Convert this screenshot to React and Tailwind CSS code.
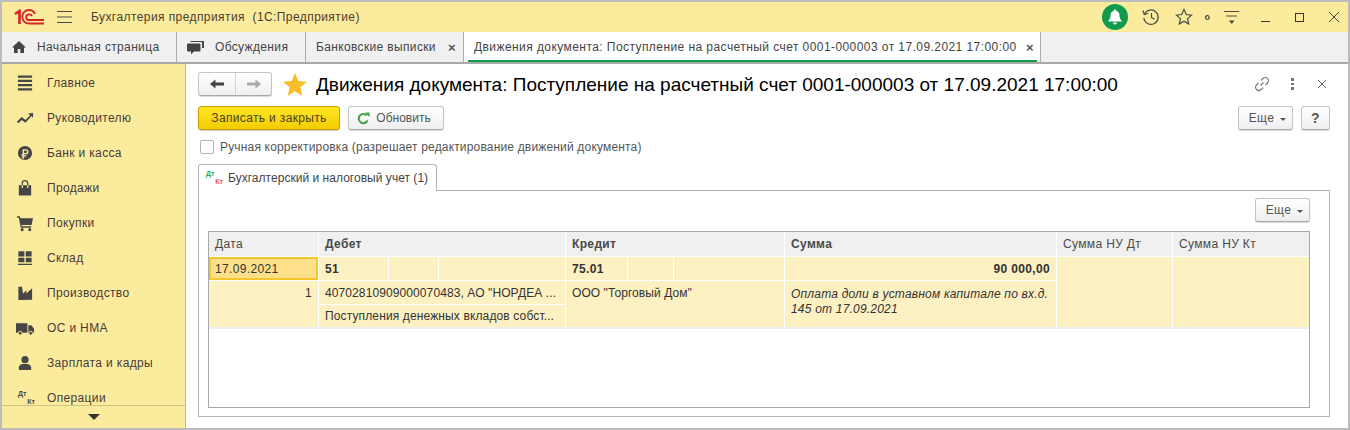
const menu = [
  ['Главное', <path key="a" d="M2 1h15v2.4H2zM2 5.500h15v2.400H2zM2 10h15v2.400H2zM2 14.500h15v2.400H2z" />],
  ['Руководителю', <path key="a" d="M1 13l5-5 4 3 5-5-2.500-1.500L18 3.500V9l-1.500-2L10 14l-4-3-3.500 3.500z" />],
  ['Банк и касса', <path key="a" fillRule="evenodd" d="M9.500 1.500a7.500 7.500 0 100 15 7.500 7.500 0 000-15zM7 5h3.500a2.700 2.700 0 010 5.400H8.600v1h2.400v1.200H8.600V15H7v-1.400H5.800v-1.200H7v-1H5.800V10H7zm1.600 1.400v2.600h1.800a1.300 1.300 0 000-2.600z" />],
  ['Продажи', <path key="a" d="M3 6h3V4a3.500 3.500 0 017 0v2h3v11H3zm4.300 0h4.400V4a2.200 2.200 0 00-4.400 0zM6 6v3h1.300V6zm5.700 0v3H13V6z" />],
  ['Покупки', <g key="a"><path d="M1 2h3l.6 2H18l-1.600 7H5.800l.3 1.500H16V14H5L3 3.500H1z" /><circle cx="6.500" cy="16" r="1.600" /><circle cx="14.500" cy="16" r="1.600" /></g>],
  ['Склад', <path key="a" d="M2.500 2h6.300v5.500H2.500zM10.200 2h6.300v5.500h-6.300zM2.500 8.800h6.300v4.700H2.500zM10.200 8.800h6.300v4.700h-6.300zM2 15h15v1.500H2z" />],
  ['Производство', <path key="a" d="M2.500 16.500V2.500h3.800l1.200 7 3.500-3.500v3.500l6-5.500v12z" />],
  ['ОС и НМА', <g key="a"><path d="M0 4h12v10H0zM13 6h3.200L19 9.500V14h-6z" /><circle cx="4.500" cy="14.500" r="2" stroke="#fbec9d" /><circle cx="15.500" cy="14.500" r="2" stroke="#fbec9d" /></g>],
  ['Зарплата и кадры', <g key="a"><circle cx="9.500" cy="5.500" r="3.800" /><path d="M3 16.500v-3c0-2 2.500-3.300 4-3.500h5c1.500.2 4 1.500 4 3.500v3z" /></g>],
]

const baseText = 'text-[12px] tracking-[0.35px] leading-none'

const Tab = ({ width, children, withClose }) => (
  <div className={`flex items-center h-full border-r border-[#adadad] ${width} ${baseText} text-[#444]`}>
    {children}
    {withClose && <span className="ml-auto mr-[7px] text-[13px] font-bold text-[#555]">×</span>}
  </div>
)

const Button = ({ children, className = '' }) => (
  <div className={`flex items-center justify-center h-[24px] rounded-[3px] border border-[#c4c4c4] border-b-[#a8a8a8] bg-gradient-to-b from-white to-[#efefef] shadow-[0_1px_1px_rgba(0,0,0,0.15)] ${baseText} text-[#555] ${className}`}>
    {children}
  </div>
)

const Caret = () => <span className="ml-[6px] mt-[3px] border-x-[3px] border-t-[3px] border-x-transparent border-t-[#555]" />

const HeaderCell = ({ span, bold, children }) => (
  <div className={`${span} bg-[#f0f0f0] flex items-center pl-[6px] pb-[1px] ${baseText} ${bold ? 'font-bold' : ''} text-[#4a4a4a]`}>{children}</div>
)

const Cell = ({ className = '', children }) => (
  <div className={`bg-[#fdf0c2] flex items-center px-[6px] ${baseText} text-[#333] whitespace-nowrap overflow-hidden ${className}`}>{children}</div>
)

const DtKt = ({ dt, kt }) => (
  <div className="flex flex-col w-[17px] h-[16px] font-bold text-[7px] leading-[8px] tracking-normal shrink-0">
    <span className="self-start" style={{ color: dt }}>Дт</span>
    <span className="self-end" style={{ color: kt }}>Кт</span>
  </div>
)

const App = () => {
  return (
    <div className="w-[1350px] h-[430px] border-2 border-[#bcbcbc] flex flex-col overflow-hidden bg-white font-['Liberation_Sans',Arial,sans-serif]">
      {/* top bar */}
      <div className="h-[30px] shrink-0 bg-[#fbec9d] flex items-center text-[#4e3b2e]">
        <svg width="30" height="16" viewBox="0 0 30 16" className="ml-[12px]" fill="none" stroke="#d8232a" strokeWidth="1.800">
          <path d="M1 5L5.500 2v13" strokeWidth="2.600" />
          <path d="M21 5c-1-2.500-3-4-6-4a6.500 6.500 0 000 13.500h15" />
          <path d="M18 7c-.5-1-1.500-1.600-3-1.600a2.700 2.700 0 000 5.600h15" />
        </svg>
        <svg width="16" height="14" viewBox="0 0 16 14" className="ml-[13px]" stroke="#4a4a4a" strokeWidth="1.200">
          <path d="M0 1.500h15M0 7h15M0 12.500h15" />
        </svg>
        <span className="ml-[18px] text-[12px] tracking-[0.42px]">Бухгалтерия предприятия&nbsp; (1С:Предприятие)</span>
        <div className="ml-auto flex items-center">
          <div className="w-[26px] h-[26px] rounded-full bg-[#0f9a4c] flex items-center justify-center">
            <svg width="16" height="16" viewBox="0 0 16 16" fill="#fff">
              <path d="M8 0.500c.8 0 1.300.5 1.300 1.200C11.500 2.300 12.500 4 12.500 6.500c0 2.500.8 3.800 2.300 5.300v.7H1.200v-.7C2.700 10.300 3.500 9 3.500 6.500 3.500 4 4.500 2.300 6.700 1.700 6.700 1 7.200.5 8 .5zM6 13.500h4a2 2 0 01-4 0z" />
            </svg>
          </div>
          <svg width="18" height="18" viewBox="0 0 18 18" className="ml-[14px]" fill="none" stroke="#4a4a4a" strokeWidth="1.200">
            <path d="M2.500 6A7.200 7.200 0 111.800 10" />
            <path d="M1 2.500L2.300 6.500 6 5.500M9.500 5v4.500l3 1.800" />
          </svg>
          <svg width="18" height="18" viewBox="0 0 18 18" className="ml-[15px]" fill="none" stroke="#4a4a4a" strokeWidth="1.200">
            <path d="M9 1.500l2.300 5 5.200.6-3.900 3.500 1.100 5.400L9 13.300 4.300 16l1.100-5.400L1.500 7.100l5.200-.6z" />
          </svg>
          <span className="ml-[12px] text-[9px] font-bold text-[#444] leading-none">o</span>
          <svg width="16" height="16" viewBox="0 0 16 16" className="ml-[14px]" stroke="#4a4a4a" strokeWidth="1.100">
            <path d="M0 2.500h15M2 7h11" />
            <path d="M5 11.500h5.500L7.750 15z" fill="#4a4a4a" stroke="none" />
          </svg>
          <div className="ml-[21px] w-[9px] h-[9px] border-b border-[#333]" />
          <div className="ml-[25px] w-[9px] h-[9px] border border-[#333]" />
          <svg width="10" height="10" viewBox="0 0 10 10" className="ml-[25px] mr-[9px]" stroke="#444" strokeWidth="1">
            <path d="M0 0l10 10M10 0L0 10" />
          </svg>
        </div>
      </div>

      {/* open tabs */}
      <div className="h-[32px] shrink-0 bg-[#f0f0f0] border-b-2 border-[#a9a9a9] flex">
        <Tab width="w-[175px]">
          <svg width="14" height="12" viewBox="0 0 14 12" fill="#444" className="ml-[10px] mr-[11px]">
            <path d="M7 0l7 6.500h-2V12H8.300V8H5.700v4H2V6.500H0z" />
          </svg>
          Начальная страница
        </Tab>
        <Tab width="w-[129px]">
          <svg width="17" height="15" viewBox="0 0 17 15" fill="#444" className="ml-[10px] mr-[11px]">
            <path d="M3 2h11a1 1 0 011 1v5h2V1H4zM1 3.500h11.500a1 1 0 011 1v6a1 1 0 01-1 1H7L4 14.500v-3H1a1 1 0 01-1-1v-6a1 1 0 011-1z" />
          </svg>
          Обсуждения
        </Tab>
        <Tab width="w-[158px]" withClose>
          <span className="ml-[10px]">Банковские выписки</span>
        </Tab>
        <div className="relative flex items-center w-[577px] h-[30px] bg-white border-r border-[#adadad] text-[12px] tracking-[0.43px] leading-none text-[#444]">
          <span className="ml-[10px]">Движения документа: Поступление на расчетный счет 0001-000003 от 17.09.2021 17:00:00</span>
          <span className="ml-auto mr-[6px] text-[13px] font-bold text-[#555]">×</span>
          <div className="absolute left-[4px] right-[3px] bottom-0 h-[2px] bg-[#0f9a4c]" />
        </div>
      </div>

      <div className="flex flex-1 min-h-0">
        {/* sidebar */}
        <div className="w-[184px] shrink-0 bg-[#fbec9d] border-r border-[#c9bd7c] flex flex-col">
          <div className="flex-1 min-h-0 overflow-hidden pt-[1px]">
            {menu.map(([label, icon]) => (
              <div key={label} className="h-[35px] flex items-center text-[#4a3a3a]">
                <svg width="18" height="18" viewBox="0 0 19 18" fill="#464646" className="ml-[14px] mr-[13px] shrink-0">{icon}</svg>
                <span className={baseText}>{label}</span>
              </div>
            ))}
            <div className="h-[35px] flex items-center text-[#4a3a3a]">
              <div className="ml-[16px] mr-[12px]"><DtKt dt="#464646" kt="#464646" /></div>
              <span className={baseText}>Операции</span>
            </div>
          </div>
          <div className="h-[23px] shrink-0 border-t border-[#cfc386] flex items-center justify-center">
            <span className="border-x-[6px] border-t-[6px] border-x-transparent border-t-[#333]" />
          </div>
        </div>

        {/* document form */}
        <div className="flex-1 min-w-0 pt-[8px] pl-[12px] pr-[18px]">
          <div className="h-[24px] flex items-center">
            <div className="flex h-[24px] w-[74px] rounded-[3px] border border-[#c4c4c4] border-b-[#a8a8a8] bg-gradient-to-b from-white to-[#efefef] shadow-[0_1px_1px_rgba(0,0,0,0.15)]">
              <div className="w-[37px] border-r border-[#d5d5d5] flex items-center justify-center">
                <svg width="14" height="10" viewBox="0 0 14 10" fill="#444"><path d="M0 5l5.500-4.500V3.500H14v3H5.500v3z" /></svg>
              </div>
              <div className="flex-1 flex items-center justify-center">
                <svg width="14" height="10" viewBox="0 0 14 10" fill="#aaa"><path d="M14 5L8.500.500V3.500H0v3h8.500v3z" /></svg>
              </div>
            </div>
            <svg width="24" height="23" viewBox="0 0 24 23" className="ml-[11px]" fill="#f7be2a">
              <path d="M12 0l3.300 8 8.700.7-6.600 5.600 2 8.700L12 18.300 4.600 23l2-8.700L0 8.700 8.700 8z" />
            </svg>
            <h1 className="ml-[9px] text-[19px] leading-none font-normal text-black whitespace-nowrap">Движения документа: Поступление на расчетный счет 0001-000003 от 17.09.2021 17:00:00</h1>
            <div className="ml-auto flex items-center">
              <svg width="16" height="16" viewBox="0 0 16 16" fill="none" stroke="#777" strokeWidth="1.100">
                <path d="M6.500 9.500L9.500 6.500M7 4.500l2-2a3 3 0 014.500 4.500l-2 2M9 11.500l-2 2A3 3 0 012.500 9l2-2" />
              </svg>
              <div className="ml-[21px] flex flex-col gap-[2px]">
                <span className="w-[3px] h-[2.500px] bg-[#777]" />
                <span className="w-[3px] h-[2.500px] bg-[#777]" />
                <span className="w-[3px] h-[2.500px] bg-[#777]" />
              </div>
              <svg width="8" height="8" viewBox="0 0 8 8" className="ml-[24px] mr-[4px]" stroke="#666" strokeWidth="1">
                <path d="M0 0l8 8M8 0L0 8" />
              </svg>
            </div>
          </div>

          <div className="mt-[10px] flex items-center">
            <div className={`flex items-center justify-center w-[142px] h-[24px] rounded-[3px] border border-[#c29e00] bg-gradient-to-b from-[#ffe81f] to-[#f3cc00] shadow-[0_1px_1px_rgba(0,0,0,0.2)] ${baseText} text-[#4a4020]`}>Записать и закрыть</div>
            <Button className="ml-[8px] w-[96px] !tracking-normal pr-[4px]">
              <svg width="13" height="13" viewBox="0 0 13 13" fill="none" className="mr-[6px]">
                <path d="M10.500 8.500a4.600 4.600 0 11-.7-5" stroke="#3fa142" strokeWidth="2" />
                <path d="M8 .5h4.500V5z" fill="#3fa142" />
              </svg>
              Обновить
            </Button>
            <Button className="ml-auto w-[55px] pl-[4px]">Еще<Caret /></Button>
            <Button className="ml-[8px] w-[29px] !text-[14px] font-bold">?</Button>
          </div>

          <div className="mt-[9px] h-[15px] flex items-center text-[12px] tracking-[0.17px] leading-none text-[#555]">
            <span className="w-[14px] h-[14px] ml-[2px] rounded-[2px] border border-[#b5b5b5] bg-white" />
            <span className="ml-[6px]">Ручная корректировка (разрешает редактирование движений документа)</span>
          </div>

          {/* tab strip */}
          <div className="mt-[10px] relative z-10 -mb-px h-[27px] w-[239px] rounded-t-[3px] border border-b-0 border-[#b5b5b5] bg-white flex items-center pl-[7px]">
            <DtKt dt="#2aa84f" kt="#e8504a" />
            <span className="ml-[5px] whitespace-nowrap text-[12px] tracking-[0.03px] leading-none text-[#444]">Бухгалтерский и налоговый учет (1)</span>
          </div>

          {/* tab panel */}
          <div className="h-[227px] border border-[#b5b5b5] px-[9px] pt-[7px]">
            <div className="flex justify-end mr-[10px]">
              <Button className="w-[55px] pl-[4px]">Еще<Caret /></Button>
            </div>
            <div className="mt-[9px] w-[1102px] h-[177px] border border-[#a9a9a9]">
              <div className="grid grid-cols-[109px_69px_49px_126px_61px_45px_110px_271px_115px_136px] grid-rows-[24px_23px_23px_22px] gap-px bg-white">
                <HeaderCell span="col-span-1">Дата</HeaderCell>
                <HeaderCell span="col-span-3" bold>Дебет</HeaderCell>
                <HeaderCell span="col-span-3" bold>Кредит</HeaderCell>
                <HeaderCell span="col-span-1" bold>Сумма</HeaderCell>
                <HeaderCell span="col-span-1">Сумма НУ Дт</HeaderCell>
                <HeaderCell span="col-span-1">Сумма НУ Кт</HeaderCell>

                <Cell className="!bg-[#ffe08a] border-2 border-[#f6c62b] !px-[4px]">17.09.2021</Cell>
                <Cell className="font-bold">51</Cell>
                <Cell />
                <Cell />
                <Cell className="font-bold">75.01</Cell>
                <Cell />
                <Cell />
                <Cell className="font-bold justify-end">90 000,00</Cell>
                <Cell className="row-span-3" />
                <Cell className="row-span-3" />

                <Cell className="row-span-2 !items-start justify-end pt-[6px]">1</Cell>
                <Cell className="col-span-3 !tracking-[0.1px]">40702810909000070483, АО "НОРДЕА ...</Cell>
                <Cell className="col-span-3 row-span-2 !items-start pt-[6px] !tracking-[0.07px]">ООО "Торговый Дом"</Cell>
                <Cell className="row-span-2 !items-start pt-[6px] italic !whitespace-normal !leading-[15px] !tracking-[0.2px]">Оплата доли в уставном капитале по вх.д. 145 от 17.09.2021</Cell>

                <Cell className="col-span-3 !tracking-[0.13px]">Поступления денежных вкладов собст...</Cell>
              </div>
              <div className="h-[2px] bg-[#eeeeee]" />
            </div>
          </div>
        </div>
      </div>
    </div>
  )
}

export default App
